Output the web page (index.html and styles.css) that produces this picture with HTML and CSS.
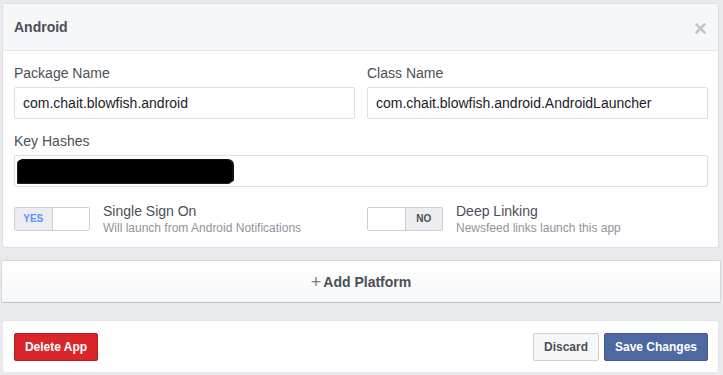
FILE: index.html
```html
<!DOCTYPE html>
<html lang="en">
<head>
    <meta charset="UTF-8">
    <title>Android Platform Settings</title>
    <link rel="stylesheet" href="styles.css">
</head>
<body>
    <div class="card platform">
        <div class="card-header">
            <span class="card-title">Android</span>
            <svg class="close" width="11" height="11" viewBox="0 0 11 11">
                <path d="M1.5 1.5 L9.5 9.5 M9.5 1.5 L1.5 9.5" stroke="#bec2c9" stroke-width="2.4" stroke-linecap="square"/>
            </svg>
        </div>
        <div class="card-body">
            <div class="row">
                <div class="field">
                    <label>Package Name</label>
                    <div class="input">com.chait.blowfish.android</div>
                </div>
                <div class="field">
                    <label>Class Name</label>
                    <div class="input">com.chait.blowfish.android.AndroidLauncher</div>
                </div>
            </div>
            <div class="field wide">
                <label>Key Hashes</label>
                <div class="input hashes"><span class="redacted"></span></div>
            </div>
            <div class="row toggles">
                <div class="option">
                    <div class="switch on"><span class="side label-side">YES</span><span class="side knob"></span></div>
                    <div class="option-text">
                        <div class="option-title">Single Sign On</div>
                        <div class="option-sub">Will launch from Android Notifications</div>
                    </div>
                </div>
                <div class="option">
                    <div class="switch off"><span class="side knob"></span><span class="side label-side">NO</span></div>
                    <div class="option-text">
                        <div class="option-title">Deep Linking</div>
                        <div class="option-sub">Newsfeed links launch this app</div>
                    </div>
                </div>
            </div>
        </div>
    </div>

    <div class="add-platform"><span class="plus">+</span>Add Platform</div>

    <div class="card footer">
        <button class="btn danger">Delete App</button>
        <div class="footer-right">
            <button class="btn plain">Discard</button>
            <button class="btn primary">Save Changes</button>
        </div>
    </div>
</body>
</html>
```

FILE: styles.css
```css
body {
    margin: 0;
    padding-top: 3px;
    background-color: #e9eaed;
    font-family: "Liberation Sans", Arial, sans-serif;
    color: #4b4f56;
}

.card {
    background-color: #ffffff;
    border: 1px solid #dddfe2;
    border-radius: 3px;
    margin-left: 2px;
    width: 715px;
}

.card-header {
    height: 46px;
    background-color: #f6f7f9;
    border-bottom: 1px solid #e5e6e9;
    display: flex;
    align-items: center;
    justify-content: space-between;
    padding: 0 12px 0 11px;
}

.card-title {
    font-size: 14px;
    font-weight: bold;
    color: #4b4f56;
}

.close {
    margin-top: 2px;
}

.card-body {
    padding: 14px 10px 11px 11px;
}

.row {
    display: flex;
    gap: 12px;
}

.field {
    flex: 1;
}

.field label {
    display: block;
    font-size: 14px;
    line-height: 16px;
    margin-bottom: 6px;
    color: #4b4f56;
}

.input {
    height: 30px;
    border: 1px solid #dddfe2;
    border-radius: 2px;
    font-size: 14px;
    line-height: 30px;
    padding: 0 8px;
    color: #1d2129;
}

.wide {
    margin-top: 14px;
}

.hashes {
    display: flex;
    align-items: center;
    padding: 0 3px;
}

.redacted {
    display: block;
    width: 214px;
    height: 23px;
    background-color: #000000;
    border-radius: 2px 6px 3px 1px;
    box-shadow: 2px -1px 0 #111, -1px 1px 0 #222;
}

.toggles {
    margin-top: 20px;
}

.option {
    flex: 1;
    display: flex;
    align-items: flex-start;
}

.switch {
    display: flex;
    width: 74px;
    height: 22px;
    border: 1px solid #ccd0d5;
    border-radius: 2px;
    background-color: #f5f6f7;
    overflow: hidden;
    flex-shrink: 0;
}

.side {
    flex: 1;
    font-size: 10px;
    font-weight: bold;
    line-height: 22px;
    text-align: center;
}

.on .label-side {
    background-color: #ebedf0;
    color: #5890ff;
}

.off .label-side {
    background-color: #ebedf0;
    color: #4b4f56;
}

.knob {
    background-color: #ffffff;
}

.on .knob {
    border-left: 1px solid #ccd0d5;
}

.off .knob {
    border-right: 1px solid #ccd0d5;
}

.option-text {
    margin-left: 13px;
    margin-top: -5px;
}

.option-title {
    font-size: 14px;
    line-height: 18px;
    color: #4b4f56;
}

.option-sub {
    font-size: 12px;
    line-height: 16px;
    color: #90949c;
}

.add-platform {
    margin: 12px 2px 0 1px;
    height: 41px;
    border: 1px solid #d3d6db;
    border-bottom-color: #bdc1c9;
    border-radius: 2px;
    background: linear-gradient(#ffffff, #f6f7f9);
    display: flex;
    align-items: center;
    justify-content: center;
    font-size: 14px;
    font-weight: bold;
    color: #4b4f56;
}

.plus {
    font-weight: normal;
    font-size: 18px;
    color: #7f7f7f;
    margin-right: 2px;
    margin-top: 1px;
}

.footer {
    margin-top: 17px;
    height: 53px;
    display: flex;
    align-items: center;
    justify-content: space-between;
    padding: 0 10px 0 11px;
    box-sizing: border-box;
    width: 717px;
    border-color: #e5e6e9;
}

.footer-right {
    display: flex;
    gap: 5px;
}

.btn {
    height: 28px;
    padding: 0;
    border-radius: 2px;
    font-family: "Liberation Sans", Arial, sans-serif;
    font-size: 12px;
    font-weight: bold;
    white-space: nowrap;
    cursor: pointer;
}

.danger {
    width: 84px;
    background-color: #d8262c;
    border: 1px solid #b71c1c;
    color: #ffffff;
}

.plain {
    width: 66px;
    background-color: #f6f7f9;
    border: 1px solid #ced0d4;
    color: #4b4f56;
}

.primary {
    width: 104px;
    background-color: #4e69a2;
    border: 1px solid #435a8b;
    color: #ffffff;
}
```
